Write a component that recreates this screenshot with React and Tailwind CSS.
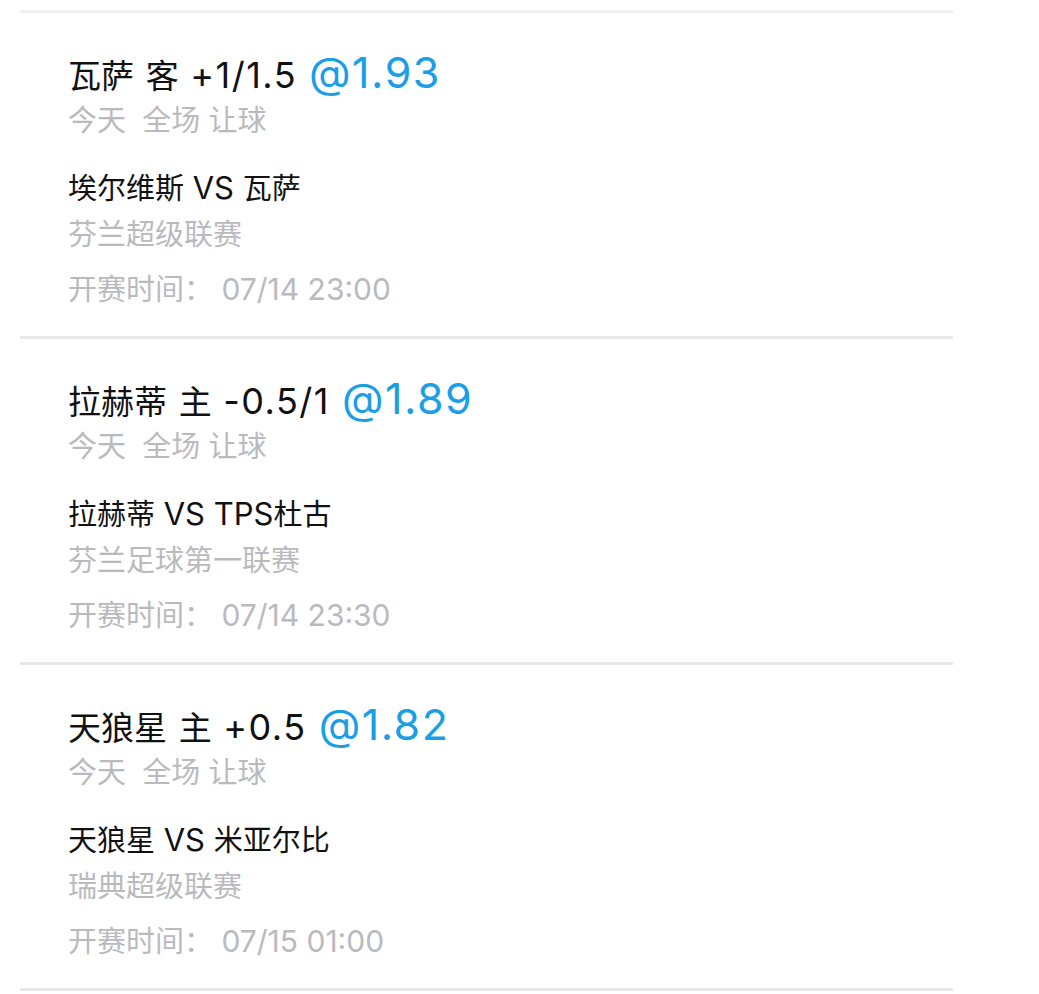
const bets = [
  {
    pick: '瓦萨 客 +1/1.5',
    odds: '@1.93',
    teams: '埃尔维斯 VS 瓦萨',
    league: '芬兰超级联赛',
    time: '07/14 23:00',
  },
  {
    pick: '拉赫蒂 主 -0.5/1',
    odds: '@1.89',
    teams: '拉赫蒂 VS TPS杜古',
    league: '芬兰足球第一联赛',
    time: '07/14 23:30',
  },
  {
    pick: '天狼星 主 +0.5',
    odds: '@1.82',
    teams: '天狼星 VS 米亚尔比',
    league: '瑞典超级联赛',
    time: '07/15 01:00',
  },
]

// latin runs render a touch larger, like the phone font does
function Mixed({ text, latin }) {
  return text.split(/([\x20-\x7e]+)/).map((part, i) =>
    /[\x20-\x7e]/.test(part) ? (
      <span key={i} className={latin}>
        {part}
      </span>
    ) : (
      <span key={i}>{part}</span>
    )
  )
}

function BetCard({ bet }) {
  return (
    <div className="border-b-[3px] border-[#e6e7e9] pl-[48px] pt-[37px] pb-[29px]">
      <div className="flex items-baseline h-[44px] leading-[44px] whitespace-pre">
        <span className="text-[33px] text-[#111]">
          <Mixed text={bet.pick} latin="text-[36px] tracking-[1.5px]" />
        </span>
        <span className="ml-[12px] text-[43px] tracking-[1.5px] text-[#1a9ee6]">{bet.odds}</span>
      </div>
      <div className="mt-[9px] h-[36px] leading-[36px] text-[29px] text-[#bababe] whitespace-pre">
        {'今天  全场 让球'}
      </div>
      <div className="mt-[31px] h-[36px] leading-[36px] text-[29px] text-[#111] whitespace-pre">
        <Mixed text={bet.teams} latin="text-[31px]" />
      </div>
      <div className="mt-[11px] h-[36px] leading-[36px] text-[29px] text-[#bababe]">{bet.league}</div>
      <div className="mt-[18px] h-[36px] leading-[36px] text-[29px] text-[#bababe] whitespace-pre">
        开赛时间：<span className="text-[30px]">{' ' + bet.time}</span>
      </div>
    </div>
  )
}

export default function App() {
  return (
    <div
      className="min-h-screen bg-white pt-[10px]"
      style={{ fontFamily: 'Inter, "Noto Sans CJK SC", sans-serif' }}
    >
      <div className="ml-[20px] w-[933px]">
        <div className="h-[3px] bg-[#f0f0f1]" />
        {bets.map((bet) => (
          <BetCard key={bet.time} bet={bet} />
        ))}
      </div>
    </div>
  )
}
